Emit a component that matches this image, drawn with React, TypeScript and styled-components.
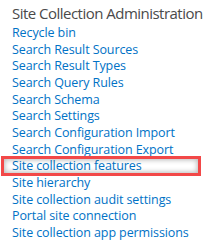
import styled, { createGlobalStyle } from "styled-components";

const GlobalStyle = createGlobalStyle`
  html, body {
    margin: 0;
    padding: 0;
    background: #ffffff;
  }
`;

const Panel = styled.div`
  width: 203px;
  height: 248px;
  padding: 3px 0 0 12px;
  box-sizing: border-box;
  font-family: "Open Sans", "Noto Sans", sans-serif;
  overflow: hidden;
`;

const Heading = styled.h3`
  margin: 0;
  font-size: 15px;
  font-weight: 400;
  line-height: 20px;
  color: #4a4a4a;
  white-space: nowrap;
  letter-spacing: -0.52px;
`;

const LinkList = styled.ul`
  list-style: none;
  margin: 0;
  padding: 0;
  display: flex;
  flex-direction: column;
`;

const Item = styled.li<{ $highlighted?: boolean }>`
  position: relative;
  height: 16.67px;
  line-height: 16.67px;
  white-space: nowrap;

  ${({ $highlighted }) =>
    $highlighted &&
    `
    &::after {
      content: "";
      position: absolute;
      left: -11px;
      right: 2px;
      top: 0;
      bottom: -3px;
      border: 3px solid #f24848;
      box-shadow: inset 0 0 5px 1px rgba(0, 0, 0, 0.28);
      pointer-events: none;
    }
  `}
`;

const Link = styled.a`
  font-size: 12.5px;
  color: #0072c6;
  text-decoration: none;
  letter-spacing: -0.1px;
`;

const links = [
  "Recycle bin",
  "Search Result Sources",
  "Search Result Types",
  "Search Query Rules",
  "Search Schema",
  "Search Settings",
  "Search Configuration Import",
  "Search Configuration Export",
  "Site collection features",
  "Site hierarchy",
  "Site collection audit settings",
  "Portal site connection",
  "Site collection app permissions",
];

export default function App() {
  return (
    <>
      <GlobalStyle />
      <Panel>
        <Heading>Site Collection Administration</Heading>
        <LinkList>
          {links.map((label) => (
            <Item key={label} $highlighted={label === "Site collection features"}>
              <Link href="#">{label}</Link>
            </Item>
          ))}
        </LinkList>
      </Panel>
    </>
  );
}
